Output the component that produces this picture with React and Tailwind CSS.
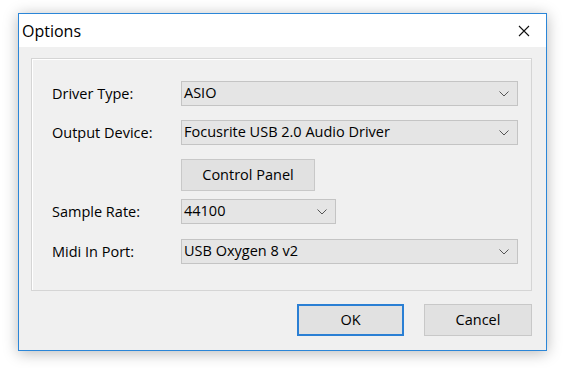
import { ChevronDown } from "lucide-react"

const font = { fontFamily: '"Open Sans", "Noto Sans", sans-serif' }

function Combo({ value, width }) {
  return (
    <div
      className={`${width} h-[25px] flex items-center justify-between bg-[#e5e5e5] border border-[#c4c4c4] pl-[2px] pr-[8px]`}
    >
      <span className="text-[14.5px] text-black leading-none">{value}</span>
      <svg width="10" height="6" viewBox="0 0 10 6" className="text-[#555]">
        <path d="M0.5 0.5 L5 5 L9.5 0.5" fill="none" stroke="currentColor" strokeWidth="1" />
      </svg>
    </div>
  )
}

function Row({ label, children, className }) {
  return (
    <div className={`flex items-center ${className}`}>
      <div className="w-[129px] text-[14.5px] text-black">{label}</div>
      {children}
    </div>
  )
}

export default function App() {
  return (
    <div className="w-[564px] h-[368px] bg-white pl-[18px] pt-[13px]" style={font}>
      {/* Ventana */}
      <div className="w-[529px] h-[338px] border border-[#2b86d8] bg-[#f0f0f0] flex flex-col shadow-[0_2px_14px_rgba(0,0,0,0.28)]">
        {/* Barra de titulo */}
        <div className="h-[33px] bg-white flex items-center justify-between pl-[3px] pr-[16px]">
          <span className="text-[16px] text-black">Options</span>
          <svg width="12" height="12" viewBox="0 0 12 12">
            <path d="M1 1 L11 11 M11 1 L1 11" stroke="#111" strokeWidth="1.1" fill="none" />
          </svg>
        </div>

        {/* Grupo */}
        <div className="ml-[12px] mt-[11px] w-[501px] h-[233px] border border-[#d5d5d5]">
          <div className="w-full h-full border-l border-t border-white pl-[19px] pt-[21px]">
            <Row label="Driver Type:">
              <Combo value="ASIO" width="w-[337px]" />
            </Row>
            <Row label="Output Device:" className="mt-[14px]">
              <Combo value="Focusrite USB 2.0 Audio Driver" width="w-[337px]" />
            </Row>
            <div className="ml-[129px] mt-[14px] w-[134px] h-[32px] bg-[#e1e1e1] border border-[#c8c8c8] flex items-center justify-center text-[14.5px] text-black">
              Control Panel
            </div>
            <Row label="Sample Rate:" className="mt-[8px]">
              <Combo value="44100" width="w-[155px]" />
            </Row>
            <Row label="Midi In Port:" className="mt-[15px]">
              <Combo value="USB Oxygen 8 v2" width="w-[337px]" />
            </Row>
          </div>
        </div>

        {/* Botones */}
        <div className="flex justify-end gap-[20px] mt-[13px] pr-[14px]">
          <div className="w-[107px] h-[32px] bg-[#e1e1e1] border-2 border-[#2a7fd4] flex items-center justify-center text-[14.5px] text-black">
            OK
          </div>
          <div className="w-[108px] h-[32px] bg-[#e1e1e1] border border-[#c8c8c8] flex items-center justify-center text-[14.5px] text-black">
            Cancel
          </div>
        </div>
      </div>
    </div>
  )
}
